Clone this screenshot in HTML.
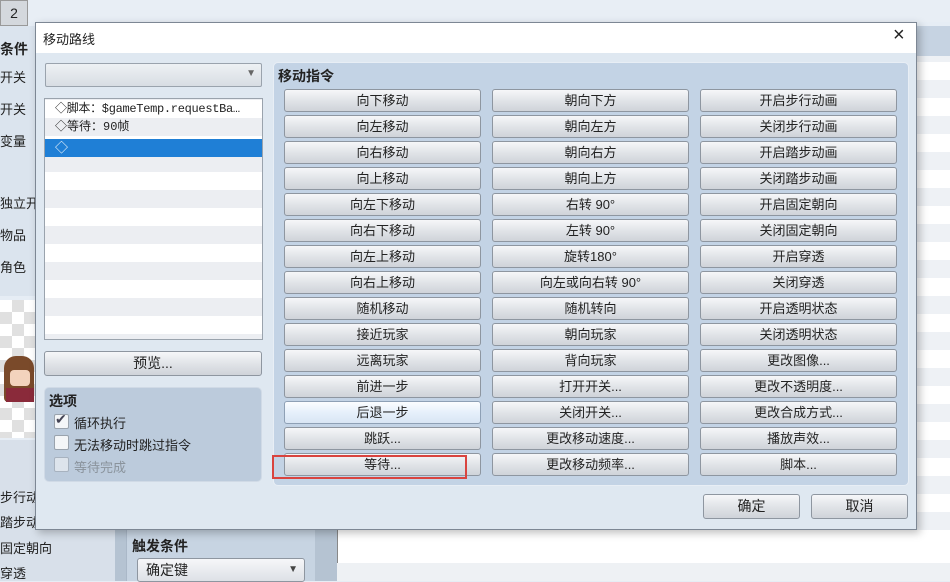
<!DOCTYPE html>
<html><head><meta charset="utf-8"><style>
*{margin:0;padding:0;box-sizing:border-box}
body{width:950px;height:581px;overflow:hidden;position:relative;background:#e6edf5;font-family:"Liberation Sans","Noto Sans CJK SC",sans-serif;font-size:13px;color:#222}
.a{position:absolute}
.btn{position:absolute;height:23px;border:1px solid #8e96a0;border-radius:3px;background:linear-gradient(#f6f7f9,#e1e4e8 50%,#cfd3d9);text-align:center;line-height:21px;font-size:13px;color:#222;white-space:nowrap}
.lbl{position:absolute;font-size:13px;color:#222;white-space:nowrap}
.row{position:absolute;height:18px;line-height:18px;padding-left:10px;font-size:13px;white-space:nowrap;overflow:hidden}
.cb{position:absolute;width:15px;height:15px;border:1px solid #9aa3ad;background:#f4f6f8;border-radius:2px}
</style></head><body>
<div class="a" style="left:0;top:0;width:950px;height:22px;background:#e8eef5"></div>
<div class="a" style="left:0;top:0;width:28px;height:26px;background:#d4d8dd;border:1px solid #999;font-size:14px;text-align:center;line-height:24px">2</div>
<div class="a" style="left:0;top:26px;width:35px;height:270px;background:#dbe4ee"></div>
<div class="lbl" style="left:0;top:39px;font-weight:bold;font-size:14px">条件</div>
<div class="lbl" style="left:0;top:67px">开关</div>
<div class="lbl" style="left:0;top:99px">开关</div>
<div class="lbl" style="left:0;top:131px">变量</div>
<div class="lbl" style="left:0;top:193px">独立开</div>
<div class="lbl" style="left:0;top:225px">物品</div>
<div class="lbl" style="left:0;top:257px">角色</div>
<div class="a" style="left:0;top:300px;width:35px;height:138px;background:repeating-conic-gradient(#e0e0e0 0 25%,#fff 0 50%) 0 0/24px 24px"></div>
<div class="a" style="left:4px;top:356px;width:30px;height:46px;border-radius:12px 12px 4px 4px;background:#7a4a2a"></div>
<div class="a" style="left:10px;top:370px;width:20px;height:16px;background:#f3d3bd;border-radius:4px"></div>
<div class="a" style="left:6px;top:388px;width:28px;height:14px;background:#8a2a3a"></div>
<div class="a" style="left:0;top:440px;width:35px;height:141px;background:#d8e0ea"></div>
<div class="a" style="left:0;top:530px;width:115px;height:51px;background:#d8e0ea"></div>
<div class="lbl" style="left:0;top:487px">步行动</div>
<div class="lbl" style="left:0;top:512px">踏步动</div>
<div class="lbl" style="left:0;top:538px">固定朝向</div>
<div class="lbl" style="left:0;top:563px">穿透</div>
<div class="a" style="left:115px;top:530px;width:222px;height:51px;background:#b5c3d2"></div>
<div class="a" style="left:126px;top:530px;width:189px;height:51px;background:#c7d4e2;border-left:1px solid #aab8c8"></div>
<div class="lbl" style="left:132px;top:536px;font-weight:bold;font-size:14px">触发条件</div>
<div class="a" style="left:137px;top:558px;width:168px;height:24px;border:1px solid #8e96a0;border-radius:3px;background:linear-gradient(#f6f7f9,#dde1e6);padding-left:8px;line-height:22px;font-size:14px">确定键<span style="position:absolute;right:6px;font-size:10px;color:#444">▼</span></div>
<div class="a" style="left:337px;top:530px;width:613px;height:51px;background:#fff;border-left:1px solid #888"></div>
<div class="a" style="left:337px;top:563px;width:613px;height:18px;background:#eef1f4"></div>
<div class="a" style="left:917px;top:26px;width:33px;height:504px;background:repeating-linear-gradient(#fff 0 18px,#eef1f5 18px 36px)"></div>
<div class="a" style="left:917px;top:26px;width:33px;height:30px;background:#c6d3e2"></div>
<!-- dialog -->
<div class="a" style="left:35px;top:22px;width:882px;height:508px;background:#dfe8f1;border:1px solid #7d8794;box-shadow:3px 3px 8px rgba(0,0,0,.25)"></div>
<div class="a" style="left:36px;top:23px;width:880px;height:30px;background:#fff"></div>
<div class="lbl" style="left:43px;top:29px;font-size:13px">移动路线</div>
<div class="lbl" style="left:893px;top:24px;font-size:20px;font-weight:300">×</div>
<div class="a" style="left:45px;top:63px;width:217px;height:24px;border:1px solid #9aa3ad;border-radius:2px;background:linear-gradient(#eef1f4,#d8dde3)"><span style="position:absolute;right:5px;top:4px;font-size:10px;color:#666">▼</span></div>
<div class="a" style="left:44px;top:98px;width:219px;height:242px;border:1px solid #9aa3ad;background:repeating-linear-gradient(#fff 0 18px,#eceef2 18px 36px) 0 1px"></div>
<div class="row" style="left:45px;width:217px;top:100px;background:#fff;font-family:'Liberation Mono','Noto Sans CJK SC',monospace;font-size:12px;letter-spacing:-0.3px">◇脚本：$gameTemp.requestBa…</div>
<div class="row" style="left:45px;width:217px;top:118px;background:#eceef2;font-family:'Liberation Mono','Noto Sans CJK SC',monospace;font-size:12px">◇等待：90帧</div>
<div class="row" style="left:45px;width:217px;top:139px;background:#1f7fd6;color:#fff">◇</div>
<div class="btn" style="left:44px;top:351px;width:218px;height:25px;line-height:23px;font-size:14px">预览...</div>
<div class="a" style="left:44px;top:387px;width:218px;height:95px;background:#bccbdc;border:1px solid #d0dae6;border-radius:5px"></div>
<div class="lbl" style="left:49px;top:391px;font-weight:bold;font-size:14px">选项</div>
<div class="cb" style="left:54px;top:414px"></div><div class="lbl" style="left:55px;top:411px;color:#445;font-size:14px">✔</div>
<div class="lbl" style="left:74px;top:413px">循环执行</div>
<div class="cb" style="left:54px;top:435px"></div>
<div class="lbl" style="left:74px;top:435px">无法移动时跳过指令</div>
<div class="cb" style="left:54px;top:457px;opacity:.6"></div>
<div class="lbl" style="left:74px;top:457px;color:#8a939c">等待完成</div>
<div class="a" style="left:273px;top:62px;width:636px;height:424px;background:#c3d3e5;border:1px solid #e8eef5;border-radius:5px"></div>
<div class="lbl" style="left:278px;top:66px;font-weight:bold;font-size:14px">移动指令</div>
<div class="btn" style="left:284px;top:89px;width:197px">向下移动</div>
<div class="btn" style="left:492px;top:89px;width:197px">朝向下方</div>
<div class="btn" style="left:700px;top:89px;width:197px">开启步行动画</div>
<div class="btn" style="left:284px;top:115px;width:197px">向左移动</div>
<div class="btn" style="left:492px;top:115px;width:197px">朝向左方</div>
<div class="btn" style="left:700px;top:115px;width:197px">关闭步行动画</div>
<div class="btn" style="left:284px;top:141px;width:197px">向右移动</div>
<div class="btn" style="left:492px;top:141px;width:197px">朝向右方</div>
<div class="btn" style="left:700px;top:141px;width:197px">开启踏步动画</div>
<div class="btn" style="left:284px;top:167px;width:197px">向上移动</div>
<div class="btn" style="left:492px;top:167px;width:197px">朝向上方</div>
<div class="btn" style="left:700px;top:167px;width:197px">关闭踏步动画</div>
<div class="btn" style="left:284px;top:193px;width:197px">向左下移动</div>
<div class="btn" style="left:492px;top:193px;width:197px">右转 90°</div>
<div class="btn" style="left:700px;top:193px;width:197px">开启固定朝向</div>
<div class="btn" style="left:284px;top:219px;width:197px">向右下移动</div>
<div class="btn" style="left:492px;top:219px;width:197px">左转 90°</div>
<div class="btn" style="left:700px;top:219px;width:197px">关闭固定朝向</div>
<div class="btn" style="left:284px;top:245px;width:197px">向左上移动</div>
<div class="btn" style="left:492px;top:245px;width:197px">旋转180°</div>
<div class="btn" style="left:700px;top:245px;width:197px">开启穿透</div>
<div class="btn" style="left:284px;top:271px;width:197px">向右上移动</div>
<div class="btn" style="left:492px;top:271px;width:197px">向左或向右转 90°</div>
<div class="btn" style="left:700px;top:271px;width:197px">关闭穿透</div>
<div class="btn" style="left:284px;top:297px;width:197px">随机移动</div>
<div class="btn" style="left:492px;top:297px;width:197px">随机转向</div>
<div class="btn" style="left:700px;top:297px;width:197px">开启透明状态</div>
<div class="btn" style="left:284px;top:323px;width:197px">接近玩家</div>
<div class="btn" style="left:492px;top:323px;width:197px">朝向玩家</div>
<div class="btn" style="left:700px;top:323px;width:197px">关闭透明状态</div>
<div class="btn" style="left:284px;top:349px;width:197px">远离玩家</div>
<div class="btn" style="left:492px;top:349px;width:197px">背向玩家</div>
<div class="btn" style="left:700px;top:349px;width:197px">更改图像...</div>
<div class="btn" style="left:284px;top:375px;width:197px">前进一步</div>
<div class="btn" style="left:492px;top:375px;width:197px">打开开关...</div>
<div class="btn" style="left:700px;top:375px;width:197px">更改不透明度...</div>
<div class="btn" style="left:284px;top:401px;width:197px;background:linear-gradient(#fbfdff,#e6f0fb 50%,#d9e6f4);border-color:#8ea0b5">后退一步</div>
<div class="btn" style="left:492px;top:401px;width:197px">关闭开关...</div>
<div class="btn" style="left:700px;top:401px;width:197px">更改合成方式...</div>
<div class="btn" style="left:284px;top:427px;width:197px">跳跃...</div>
<div class="btn" style="left:492px;top:427px;width:197px">更改移动速度...</div>
<div class="btn" style="left:700px;top:427px;width:197px">播放声效...</div>
<div class="btn" style="left:284px;top:453px;width:197px">等待...</div>
<div class="btn" style="left:492px;top:453px;width:197px">更改移动频率...</div>
<div class="btn" style="left:700px;top:453px;width:197px">脚本...</div>
<div class="a" style="left:272px;top:455px;width:195px;height:24px;border:2px solid #d9443f"></div>
<div class="btn" style="left:703px;top:494px;width:97px;height:25px;line-height:23px;font-size:14px">确定</div>
<div class="btn" style="left:811px;top:494px;width:97px;height:25px;line-height:23px;font-size:14px">取消</div>
</body></html>
